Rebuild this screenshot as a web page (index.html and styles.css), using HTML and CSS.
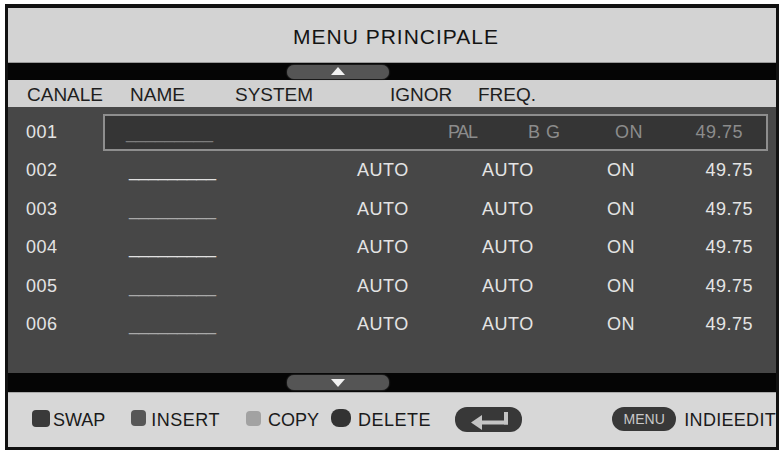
FILE: index.html
```html
<!DOCTYPE html>
<html>
<head>
<meta charset="utf-8">
<link rel="stylesheet" href="styles.css">
</head>
<body>
<div class="frame">
  <div class="title">MENU PRINCIPALE</div>
  <div class="band band-top"><div class="pill"><span class="tri-up"></span></div></div>
  <div class="header">
    <span class="h-canale">CANALE</span>
    <span class="h-name">NAME</span>
    <span class="h-system">SYSTEM</span>
    <span class="h-ignor">IGNOR</span>
    <span class="h-freq">FREQ.</span>
  </div>
  <div class="list">
    <div class="row sel">
      <span class="num">001</span>
      <div class="cells">
        <span class="name">_________</span>
        <span class="pal">PAL</span>
        <span class="bg">BG</span>
        <span class="on">ON</span>
        <span class="freq">49.75</span>
      </div>
    </div>
    <div class="row">
      <span class="num">002</span>
      <div class="cells">
        <span class="name bright">_________</span>
        <span>AUTO</span>
        <span>AUTO</span>
        <span>ON</span>
        <span class="freq">49.75</span>
      </div>
    </div>
    <div class="row">
      <span class="num">003</span>
      <div class="cells">
        <span class="name">_________</span>
        <span>AUTO</span>
        <span>AUTO</span>
        <span>ON</span>
        <span class="freq">49.75</span>
      </div>
    </div>
    <div class="row">
      <span class="num">004</span>
      <div class="cells">
        <span class="name bright">_________</span>
        <span>AUTO</span>
        <span>AUTO</span>
        <span>ON</span>
        <span class="freq">49.75</span>
      </div>
    </div>
    <div class="row">
      <span class="num">005</span>
      <div class="cells">
        <span class="name">_________</span>
        <span>AUTO</span>
        <span>AUTO</span>
        <span>ON</span>
        <span class="freq">49.75</span>
      </div>
    </div>
    <div class="row">
      <span class="num">006</span>
      <div class="cells">
        <span class="name">_________</span>
        <span>AUTO</span>
        <span>AUTO</span>
        <span>ON</span>
        <span class="freq">49.75</span>
      </div>
    </div>
  </div>
  <div class="band band-bottom"><div class="pill"><span class="tri-down"></span></div></div>
  <div class="footer">
    <span class="key k-swap"><span class="sw sw-swap"></span>SWAP</span>
    <span class="key k-insert"><span class="sw sw-insert"></span>INSERT</span>
    <span class="key k-copy"><span class="sw sw-copy"></span>COPY</span>
    <span class="key k-delete"><span class="sw sw-delete"></span>DELETE</span>
    <span class="enter">
      <svg width="67" height="25" viewBox="0 0 67 25">
        <polygon points="16,15.5 27,8 27,23" fill="#c4c4c4"/>
        <rect x="25" y="13.5" width="28" height="4" fill="#c4c4c4"/>
        <rect x="49" y="5" width="4" height="12.5" fill="#c4c4c4"/>
      </svg>
    </span>
    <span class="menu-pill">MENU</span>
    <span class="edit">INDIEEDIT</span>
  </div>
</div>
</body>
</html>
```
FILE: styles.css
```css
html, body {
  margin: 0;
  padding: 0;
  background: #ffffff;
}
body {
  font-family: "Liberation Sans", Arial, sans-serif;
}
.frame {
  margin: 4px 0 0 5px;
  width: 768px;
  border: 3px solid #111;
  border-top-width: 4px;
  overflow: hidden;
  background: #000;
}
.title {
  height: 55px;
  background: #d3d3d3;
  border-bottom: 1px solid #9a9a9a;
  box-sizing: border-box;
  display: flex;
  align-items: center;
  justify-content: center;
  padding-top: 3px;
  padding-left: 8px;
  font-size: 21px;
  letter-spacing: 1px;
  color: #141414;
}
.band {
  background: #050505;
  display: flex;
  align-items: center;
  padding-left: 279px;
}
.band-top { height: 17px; }
.band-bottom { height: 19px; }
.pill {
  width: 102px;
  height: 14px;
  border-radius: 7px;
  background: #555555;
  display: flex;
  align-items: center;
  justify-content: center;
  box-shadow: 0 0 2px #555;
}
.band-bottom .pill { height: 15px; }
.tri-up {
  width: 0;
  height: 0;
  border-left: 7px solid transparent;
  border-right: 7px solid transparent;
  border-bottom: 8px solid #f2f2f2;
  margin-bottom: 1px;
}
.tri-down {
  width: 0;
  height: 0;
  border-left: 7px solid transparent;
  border-right: 7px solid transparent;
  border-top: 8px solid #f2f2f2;
}
.header {
  height: 27px;
  background: #d1d1d1;
  display: flex;
  align-items: center;
  padding-left: 19px;
  padding-top: 2px;
  box-sizing: border-box;
  font-size: 19px;
  color: #1e1e1e;
}
.h-canale { width: 103px; }
.h-name { width: 105px; }
.h-system { width: 155px; }
.h-ignor { width: 88px; }
.list {
  height: 266px;
  box-sizing: border-box;
  background: #474747;
  padding-top: 6px;
}
.row {
  height: 38.5px;
  display: flex;
  align-items: center;
  padding-left: 18px;
  font-size: 18px;
  letter-spacing: 0.5px;
  color: #e4e4e4;
}
.num { width: 77px; }
.cells {
  width: 665px;
  box-sizing: border-box;
  display: grid;
  grid-template-columns: 228px 125px 125px 1fr auto;
  align-items: center;
  padding-left: 26px;
  padding-right: 15px;
}
.name {
  color: #a9a9a9;
  letter-spacing: -0.4px;
}
.name.bright { color: #e0e0e0; }
.freq { text-align: right; }
.row.sel .num { color: #e4e4e4; }
.row.sel .cells {
  height: 37px;
  background: #353535;
  border: 2px solid #8e8e8e;
  color: #8c8c8c;
  grid-template-columns: 322px 80px 87px 1fr auto;
  padding-left: 21px;
  padding-right: 23px;
}
.row.sel .name { color: #7c7c7c; }
.pal { letter-spacing: -1.3px; }
.bg { letter-spacing: 6px; }
.footer {
  height: 55px;
  background: #d7d7d7;
  border-top: 1px solid #aaa;
  box-sizing: border-box;
  display: flex;
  align-items: center;
  padding-left: 24px;
  font-size: 18px;
  color: #1a1a1a;
  white-space: nowrap;
}
.key {
  display: flex;
  align-items: center;
}
.sw {
  display: inline-block;
  border-radius: 4px;
  margin-top: -4px;
}
.sw-swap { width: 18px; height: 17px; background: #3a3a3a; margin-right: 3px; }
.sw-insert { width: 15px; height: 16px; background: #575757; margin-right: 5px; }
.sw-copy { width: 15px; height: 15px; background: #a2a2a2; margin-right: 7px; }
.sw-delete { width: 20px; height: 18px; background: #333333; border-radius: 8px; margin-right: 7px; }
.k-insert { margin-left: 26px; }
.k-insert, .k-delete { letter-spacing: 0.5px; }
.k-copy { margin-left: 26px; }
.k-delete { margin-left: 12px; }
.enter {
  margin-left: 24px;
  width: 67px;
  height: 25px;
  border-radius: 12px;
  background: #383838;
  display: flex;
  margin-top: -2px;
}
.menu-pill {
  margin-left: 90px;
  width: 65px;
  height: 24px;
  border-radius: 12px;
  background: #383838;
  color: #c8c8c8;
  font-size: 14px;
  display: flex;
  align-items: center;
  justify-content: center;
  margin-top: -2px;
}
.edit {
  margin-left: 8px;
  letter-spacing: 0.3px;
}
```
